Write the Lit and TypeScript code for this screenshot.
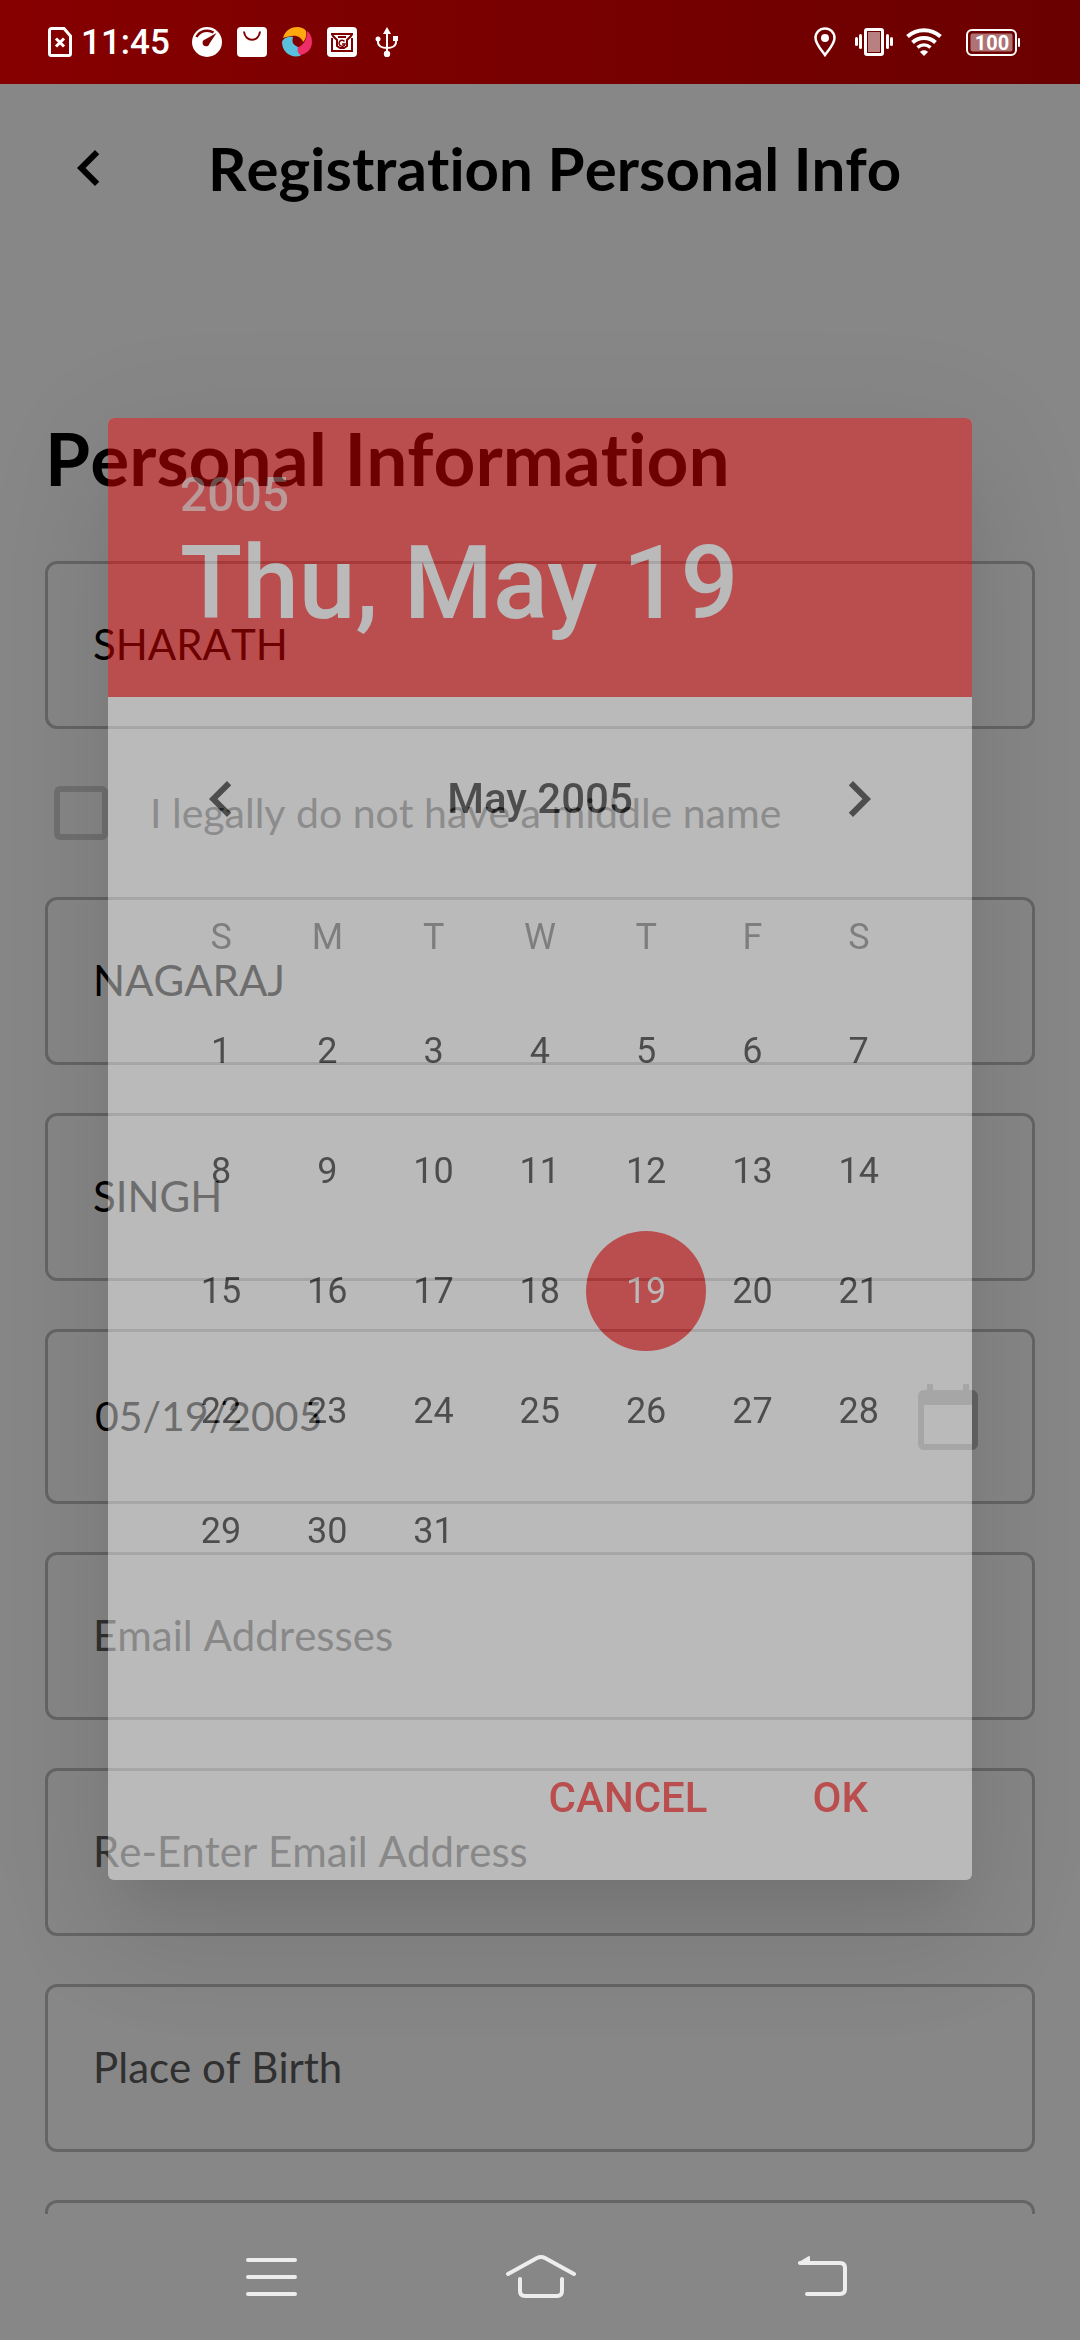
import { LitElement, html, css, svg, nothing } from "lit";
import { customElement, property, state } from "lit/decorators.js";
import { classMap } from "lit/directives/class-map.js";

const WEEKDAYS = ["S", "M", "T", "W", "T", "F", "S"];
const WEEKDAY_NAMES = ["Sunday", "Monday", "Tuesday", "Wednesday", "Thursday", "Friday", "Saturday"];
const WEEKS = [0, 1, 2, 3, 4].map((w) => [1, 2, 3, 4, 5, 6, 7].map((d) => w * 7 + d));

const chevronLeft = svg`<path d="M15.41 7.41 14 6l-6 6 6 6 1.41-1.41L10.83 12z" />`;
const chevronRight = svg`<path d="M8.59 16.59 13.17 12 8.59 7.41 10 6l6 6-6 6z" />`;
const calendar = svg`<path d="M20 3h-1V1h-2v2H7V1H5v2H4c-1.1 0-2 .9-2 2v16c0 1.1.9 2 2 2h16c1.1 0 2-.9 2-2V5c0-1.1-.9-2-2-2zm0 18H4V8h16v13z" />`;

@customElement("status-bar")
class StatusBar extends LitElement {
  static styles = css`
    :host {
      display: flex;
      align-items: center;
      justify-content: space-between;
      box-sizing: border-box;
      flex: none;
      height: 84px;
      padding: 0 60px 0 48px;
      background: linear-gradient(90deg, #860000, #6b0000);
      color: #fff;
      font-family: Roboto, sans-serif;
    }
    .group {
      display: flex;
      align-items: center;
    }
    .left {
      gap: 15px;
    }
    .right {
      gap: 13px;
    }
    .clock {
      box-sizing: border-box;
      width: 105px;
      margin-left: -15px;
      padding: 2px 0 0 9px;
      font-size: 35px;
      line-height: 42px;
      font-weight: 500;
      white-space: nowrap;
    }
    .pin {
      margin-right: 6px;
    }
    .battery {
      margin-left: 11px;
    }
    .battery-text {
      font: 700 20px Roboto, sans-serif;
    }
    svg {
      display: block;
    }
  `;

  render() {
    return html`
      <div class="group left">
        <svg width="24" height="30" viewBox="0 0 24 30" fill="none" stroke="#fff" stroke-width="3">
          <path d="M3.500 1.500h12.500l6.500 7.500v17.500a2 2 0 0 1-2 2h-17a2 2 0 0 1-2-2v-23a2 2 0 0 1 2-2z" />
          <path d="M8 11.500l8 8M16 11.500l-8 8" />
        </svg>
        <span class="clock">11:45</span>
        <svg width="30" height="30" viewBox="0 0 30 30">
          <circle cx="15" cy="15" r="15" fill="#fff" />
          <path d="M4.500 10C8 3.500 16 2 21.500 5.500" fill="none" stroke="#7f0000" stroke-width="2.500" />
          <path d="M24.500 6 17.500 16.500a3.500 3.500 0 1 1-4.500-4z" fill="#7f0000" />
        </svg>
        <svg width="30" height="30" viewBox="0 0 30 30">
          <rect width="30" height="30" rx="4" fill="#fff" />
          <path d="M7 4.500c1 11 15 11 16 0" fill="none" stroke="#7f0000" stroke-width="2" />
        </svg>
        <svg width="30" height="30" viewBox="0 0 30 30">
          <path d="M1 11C3 4 8 0 15 0c4 0 7 1 9 4 1 5-1 9-3 11-1-4-6-7-11-6-3 0-6 1-9 2z" fill="#ffa80f" />
          <path d="M25 4c4 3 5 7 5 11 0 7-5 12-12 13-3 0-5-2-6-4 2-1 3-2 4-4 5-1 9-7 9-16z" fill="#ee2e66" />
          <path d="M0 15c1-3 5-6 11-5-1 5-1 7 5 10-1 5 0 6 3 8.500C9 32 0 25 0 15z" fill="#5bc0de" />
        </svg>
        <svg width="30" height="30" viewBox="0 0 30 30" fill="none" stroke="#7f0000">
          <rect width="30" height="30" rx="4" fill="#fff" stroke="none" />
          <path d="M4 7h22M5 11v13h20V11M5 8l5 5v6l3 2h4l3-2v-6l5-5" stroke-width="2" />
          <path d="M11 10h8" stroke-width="2" />
          <path d="M17.500 14.500a3 3 0 1 0 .5 2.500h-3" stroke-width="1.500" />
        </svg>
        <svg width="30" height="30" viewBox="0 0 30 30" fill="none" stroke="#fff" stroke-width="2">
          <path d="M15 5v22M6 12v3c0 4 4 6 9 6M24 12v3c0 4-4 6-9 6" />
          <path d="M15 0l4 7h-8zM21 9h5v5h-5z" fill="#fff" stroke="none" />
          <circle cx="6" cy="12" r="2.500" fill="#fff" stroke="none" />
          <circle cx="15" cy="27" r="3.200" fill="#fff" stroke="none" />
        </svg>
      </div>
      <div class="group right">
        <svg class="pin" width="22" height="30" viewBox="0 0 22 30">
          <path
            d="M11 1.500c5.300 0 9.500 4 9.500 9.500 0 6-6 12-9.500 17C7.500 23 1.500 17 1.500 11c0-5.500 4.200-9.500 9.500-9.500z"
            fill="none"
            stroke="#fff"
            stroke-width="2.500"
          />
          <circle cx="11" cy="11" r="4" fill="#fff" />
        </svg>
        <svg width="38" height="30" viewBox="0 0 38 30" fill="#fff">
          <rect x="10.500" y="2.500" width="17" height="25" rx="1.500" fill="none" stroke="#fff" stroke-width="3" />
          <rect x="13" y="5" width="12" height="20" fill-opacity="0.5" />
          <rect x="0" y="10" width="3" height="9" rx="1.500" />
          <rect x="4" y="7" width="3" height="15" rx="1.500" />
          <rect x="31" y="7" width="3" height="15" rx="1.500" />
          <rect x="35" y="10" width="3" height="9" rx="1.500" />
        </svg>
        <svg width="36" height="30" viewBox="0 0 36 30" fill="none" stroke="#fff" stroke-width="4">
          <path d="M1.500 9.500C11 1 25 1 34.500 9.500" />
          <path d="M6.500 15.500C13 9.500 23 9.500 29.500 15.500" />
          <path d="M11.500 20.500c4-3.500 9-3.500 13 0" stroke-width="3.500" />
          <path d="M14 25c2-2.500 6-2.500 8 0l-4 4z" fill="#fff" stroke="none" />
        </svg>
        <svg class="battery" width="54" height="28" viewBox="0 0 54 28">
          <rect x="1" y="2" width="49" height="25" rx="5" fill="none" stroke="#fff" stroke-width="2" />
          <rect x="4.500" y="5.500" width="42" height="18" rx="2" fill="#fff" fill-opacity="0.450" />
          <rect x="52" y="10" width="2" height="9" rx="1" fill="#fff" />
          <text class="battery-text" x="26" y="21.500" text-anchor="middle" fill="#fff">100</text>
        </svg>
      </div>
    `;
  }
}

@customElement("form-field")
class FormField extends LitElement {
  @property() label = "";
  @property() value = "";
  @property({ type: Boolean }) picker = false;

  static styles = css`
    :host {
      display: block;
    }
    .box {
      display: flex;
      align-items: center;
      box-sizing: border-box;
      min-height: 168px;
      padding: 0 48px 0 45px;
      border: 3px solid #bfbfbf;
      border-radius: 12px;
    }
    .picker {
      min-height: 175px;
    }
    input {
      flex: 1;
      min-width: 0;
      margin: 0;
      padding: 0 0 2px;
      border: 0;
      outline: 0;
      background: none;
      color: #000;
      font: 42px/52px Lato, sans-serif;
      font-kerning: none;
      font-variant-ligatures: none;
    }
    .picker input {
      padding-left: 2px;
      font-size: 41px;
    }
    input::placeholder {
      color: #5b5b5b;
      opacity: 1;
    }
    button {
      display: flex;
      margin: 0;
      padding: 0;
      border: 0;
      background: none;
      color: #bfbfbf;
    }
  `;

  render() {
    return html`
      <div class=${classMap({ box: true, picker: this.picker })}>
        <input type="text" aria-label=${this.label} placeholder=${this.label} .value=${this.value} />
        ${this.picker
          ? html`<button type="button" aria-label="Choose date">
              <svg width="72" height="72" viewBox="0 0 24 24" fill="currentColor">${calendar}</svg>
            </button>`
          : nothing}
      </div>
    `;
  }
}

@customElement("registration-form")
class RegistrationForm extends LitElement {
  static styles = css`
    :host {
      display: block;
      height: 100%;
      overflow: hidden;
      background: #fff;
      color: #000;
      font-family: Lato, sans-serif;
      font-kerning: none;
      font-variant-ligatures: none;
    }
    header {
      display: flex;
      align-items: center;
      gap: 83px;
      height: 168px;
      padding: 0 53px;
    }
    .back {
      display: flex;
      margin: 0;
      padding: 0;
      border: 0;
      background: none;
      color: #000;
    }
    h1 {
      margin: 0;
      font-size: 60px;
      line-height: 72px;
      font-weight: 700;
      white-space: nowrap;
    }
    form {
      display: flex;
      flex-direction: column;
      gap: 48px;
      padding: 163px 45px 0;
    }
    h2 {
      margin: 0 0 11px;
      font-size: 73px;
      line-height: 87px;
      font-weight: 700;
    }
    .check {
      display: flex;
      align-items: center;
      gap: 42px;
      height: 72px;
      padding-left: 9px;
      color: #666;
      font-size: 41px;
      line-height: 52px;
    }
    .check input {
      appearance: none;
      box-sizing: border-box;
      width: 54px;
      height: 54px;
      margin: 0;
      border: 6px solid #d4d4d4;
      border-radius: 6px;
    }
  `;

  render() {
    return html`
      <header>
        <button class="back" aria-label="Back">
          <svg width="72" height="72" viewBox="0 0 24 24" fill="currentColor">${chevronLeft}</svg>
        </button>
        <h1>Registration Personal Info</h1>
      </header>
      <form>
        <h2>Personal Information</h2>
        <form-field label="First Name" value="SHARATH"></form-field>
        <label class="check"><input type="checkbox" />I legally do not have a middle name</label>
        <form-field label="Middle Name" value="NAGARAJ"></form-field>
        <form-field label="Last Name" value="SINGH"></form-field>
        <form-field label="Date of Birth" value="05/19/2005" picker></form-field>
        <form-field label="Email Addresses"></form-field>
        <form-field label="Re-Enter Email Address"></form-field>
        <form-field label="Place of Birth"></form-field>
        <form-field></form-field>
      </form>
    `;
  }
}

@customElement("date-dialog")
class DateDialog extends LitElement {
  @state() private selected = 19;

  static styles = css`
    :host {
      display: block;
      overflow: hidden;
      border-radius: 6px;
      background: #fff;
      color: #000;
      font-family: Roboto, sans-serif;
      box-shadow:
        0 33px 45px -21px rgba(0, 0, 0, 0.2),
        0 72px 114px 9px rgba(0, 0, 0, 0.14),
        0 27px 138px 24px rgba(0, 0, 0, 0.12);
    }
    button {
      margin: 0;
      padding: 0;
      border: 0;
      background: none;
      color: inherit;
      font: inherit;
    }
    .head {
      display: flex;
      flex-direction: column;
      align-items: flex-start;
      padding: 48px 72px 54px;
      background: #f00;
      color: #fff;
      font-weight: 500;
    }
    .year {
      font-size: 48px;
      line-height: 57px;
      opacity: 0.7;
    }
    .date {
      font-size: 102px;
      line-height: 120px;
    }
    .body {
      padding: 24px 60px 0;
    }
    .month {
      display: grid;
      grid-template-columns: repeat(7, 1fr);
      align-items: center;
      justify-items: center;
      height: 156px;
    }
    .month button {
      display: flex;
    }
    .month-name {
      grid-column: span 5;
      font-size: 42px;
      line-height: 50px;
      font-weight: 500;
    }
    table {
      width: 100%;
      border-collapse: collapse;
      table-layout: fixed;
      font-size: 36px;
      line-height: 42px;
    }
    th {
      box-sizing: border-box;
      height: 114px;
      padding: 6px 0 0;
      color: rgba(0, 0, 0, 0.55);
      font-weight: 400;
    }
    td {
      height: 120px;
      padding: 0;
      text-align: center;
    }
    .day {
      display: block;
      width: 120px;
      height: 120px;
      margin: 0 -7px;
      border-radius: 50%;
    }
    .day.selected {
      background: #f00;
      color: #fff;
    }
    .actions {
      display: flex;
      justify-content: flex-end;
      gap: 9px;
      padding: 130px 56px 7px 0;
      color: #f00;
      font-size: 42px;
      font-weight: 500;
    }
    .actions button {
      height: 152px;
      padding: 0 48px;
    }
  `;

  render() {
    return html`
      <div class="head">
        <button class="year">2005</button>
        <button class="date">Thu, May 19</button>
      </div>
      <div class="body">
        <div class="month">
          <button aria-label="Previous month">
            <svg width="72" height="72" viewBox="0 0 24 24" fill="currentColor">${chevronLeft}</svg>
          </button>
          <span class="month-name">May 2005</span>
          <button aria-label="Next month">
            <svg width="72" height="72" viewBox="0 0 24 24" fill="currentColor">${chevronRight}</svg>
          </button>
        </div>
        <table>
          <thead>
            <tr>
              ${WEEKDAYS.map((d, i) => html`<th scope="col" abbr=${WEEKDAY_NAMES[i]}>${d}</th>`)}
            </tr>
          </thead>
          <tbody>
            ${WEEKS.map(
              (week) => html`<tr>
                ${week.map((d) =>
                  d > 31
                    ? html`<td></td>`
                    : html`<td>
                        <button
                          class=${classMap({ day: true, selected: d === this.selected })}
                          @click=${() => (this.selected = d)}
                        >
                          ${d}
                        </button>
                      </td>`,
                )}
              </tr>`,
            )}
          </tbody>
        </table>
      </div>
      <div class="actions">
        <button>CANCEL</button>
        <button>OK</button>
      </div>
    `;
  }
}

@customElement("nav-bar")
class NavBar extends LitElement {
  static styles = css`
    :host {
      display: grid;
      grid-template-columns: repeat(3, 1fr);
      align-items: center;
      justify-items: center;
      box-sizing: border-box;
      flex: none;
      height: 126px;
      padding: 0 132px;
      background: #878787;
    }
    button {
      display: flex;
      margin: 0;
      padding: 0;
      border: 0;
      background: none;
    }
    svg {
      fill: none;
      stroke: #ededed;
      stroke-width: 4;
      stroke-linecap: round;
      stroke-linejoin: round;
    }
  `;

  render() {
    return html`
      <button aria-label="Recent apps">
        <svg width="72" height="48" viewBox="0 0 72 48">
          <path d="M16 7h47M16 24h47M16 41h47" />
        </svg>
      </button>
      <button aria-label="Home">
        <svg width="72" height="48" viewBox="0 0 72 48">
          <path d="M4 21 33 5q4-2 8 0l29 16" />
          <path d="M16 26v12q0 5 5 5h32q5 0 5-5V26" />
        </svg>
      </button>
      <button aria-label="Back">
        <svg width="72" height="48" viewBox="0 0 72 48">
          <path d="M24 10h40q5 0 5 5v21q0 5-5 5H31" />
          <path d="M23 10 33 4v6z" fill="#ededed" stroke-width="2" />
        </svg>
      </button>
    `;
  }
}

@customElement("app-root")
class AppRoot extends LitElement {
  static styles = css`
    :host {
      display: flex;
      flex-direction: column;
      height: 100vh;
      background: #878787;
    }
    .screen {
      position: relative;
      flex: 1;
      min-height: 0;
      overflow: hidden;
    }
    .scrim {
      position: absolute;
      inset: 0;
      display: flex;
      align-items: center;
      padding: 0 10%;
      background: rgba(0, 0, 0, 0.47);
    }
    .dialog {
      flex: 1;
      opacity: 0.43;
    }
  `;

  render() {
    return html`
      <status-bar></status-bar>
      <main class="screen">
        <registration-form></registration-form>
        <div class="scrim">
          <date-dialog class="dialog" role="dialog" aria-label="Choose date"></date-dialog>
        </div>
      </main>
      <nav-bar></nav-bar>
    `;
  }
}
